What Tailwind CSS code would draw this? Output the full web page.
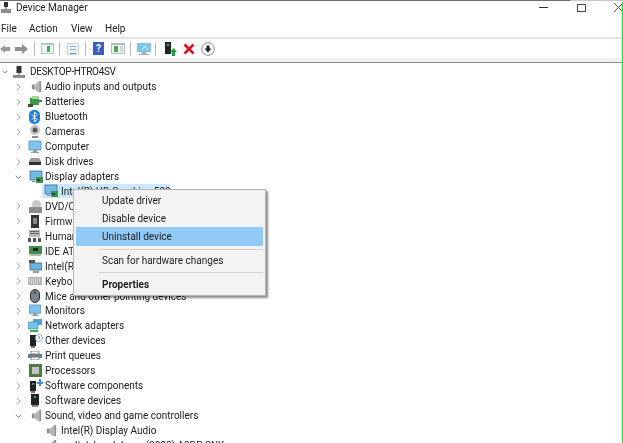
<!DOCTYPE html>
<html lang="en">
<head>
  <meta charset="UTF-8" />
  <title>Device Manager</title>
  <script src="https://cdn.jsdelivr.net/npm/@tailwindcss/browser@4"></script>
</head>
<body class="bg-white overflow-hidden">
  <svg class="hidden">
    <symbol id="closed" viewBox="0 0 6 10"><path d="M1 1l4 4-4 4" fill="none" stroke="#a6a6a6" stroke-width="1.2"/></symbol>
    <symbol id="open" viewBox="0 0 10 6"><path d="M1 1l4 4 4-4" fill="none" stroke="#555" stroke-width="1.2"/></symbol>
    <symbol id="speaker" viewBox="0 0 14 14"><path d="M2 5h3v5H2z" fill="#8a8a8a"/><path d="M5 5l5-4v13l-5-4z" fill="#b5b5b5"/><path d="M10 1h2v12h-2z" fill="#8f8f8f"/></symbol>
    <symbol id="pc" viewBox="0 0 14 14"><path d="M1 1h12v9H1z" fill="#7fc4ee" stroke="#5a8fb5" stroke-width=".8"/><path d="M5 10h4v2H5zM3 12h8v1H3z" fill="#9a9a9a"/></symbol>
    <symbol id="adapter" viewBox="0 0 14 14"><path d="M1 1h12v9H1z" fill="#72bce8" stroke="#3f6f8f" stroke-width=".8"/><path d="M3 11h3v1H3z" fill="#888"/><path d="M7 7h7v6H7z" fill="#3f8f4a"/><path d="M8 9h3v2H8z" fill="#1d4d26"/></symbol>
  </svg>

  <div class="relative w-[623px] h-[443px] overflow-hidden text-[#222] text-[10px] leading-[15px] blur-[0.35px]" style="font-family:Roboto,'Noto Sans',sans-serif">
    <!-- title bar -->
    <div class="h-px flex">
      <div class="w-[570px] bg-[#707070]"></div>
      <div class="flex-1 bg-[#c8c8c8]"></div>
    </div>
    <div class="h-[13px] flex items-center">
      <svg class="w-[10px] h-[11px] ml-px" viewBox="0 0 10 11"><path d="M3 0h4v5H3z" fill="#333"/><path d="M0 7h10v4H0z" fill="#8d8d8d"/><path d="M4.500 5h1v2h-1z" fill="#555"/></svg>
      <span class="ml-[5px]">Device Manager</span>
      <div class="ml-auto flex items-center">
        <div class="w-[9px] h-px bg-[#333] mr-[29px]"></div>
        <div class="w-[9px] h-[8px] border border-[#444] mr-[28px]"></div>
        <svg class="w-[9px] h-[9px]" viewBox="0 0 9 9"><path d="M0 0l9 9M9 0L0 9" stroke="#555" stroke-width="1"/></svg>
      </div>
    </div>

    <!-- menu bar -->
    <div class="h-[25px] flex items-center border-b-2 border-[#e4e4e4] pl-px pt-[5px]">
      <span class="w-[28px]">File</span>
      <span class="w-[42px]">Action</span>
      <span class="w-[34px]">View</span>
      <span>Help</span>
    </div>

    <!-- toolbar -->
    <div class="h-[19px] flex items-center">
      <svg class="w-[10px] h-[10px]" viewBox="0 0 10 10"><path d="M0 5l5-4v2h5v4H5v2z" fill="#9a9a9a"/></svg>
      <svg class="w-[13px] h-[10px] ml-[5px]" viewBox="0 0 13 10"><path d="M13 5L7 0v3H0v4h7v3z" fill="#8f8f8f"/></svg>
      <div class="w-px h-[14px] bg-[#bbb] ml-[6px]"></div>
      <svg class="w-[13px] h-[11px] ml-[6px]" viewBox="0 0 13 11"><path d="M0 0h13v11H0z" fill="#b7c5cf"/><path d="M1 2h11v8H1z" fill="#eef3f6"/><path d="M6 3h3v6H6z" fill="#4aa84f"/></svg>
      <div class="w-px h-[14px] bg-[#bbb] ml-[5px]"></div>
      <svg class="w-[12px] h-[12px] ml-[7px]" viewBox="0 0 12 12"><path d="M0 0h12v12H0z" fill="#c7d3da"/><path d="M1 1h10v10H1z" fill="#f2f5f7"/><path d="M3 3h6v1H3zM3 6h6v1H3z" fill="#7fb0c9"/><path d="M3 10h6v1H3z" fill="#49a7d8"/></svg>
      <div class="w-px h-[14px] bg-[#bbb] ml-[6px]"></div>
      <div class="w-[11px] h-[13px] ml-[7px] bg-[#3d5ec0] text-white font-bold text-[10px] leading-[13px] text-center">?</div>
      <svg class="w-[14px] h-[11px] ml-[7px]" viewBox="0 0 14 11"><path d="M0 0h14v11H0z" fill="#aebcc6"/><path d="M1 2h12v8H1z" fill="#f0f4f6"/><path d="M3 3h4v6H3z" fill="#4aa84f"/><path d="M9 3h3v6H9z" fill="#ccd6dc"/></svg>
      <div class="w-px h-[14px] bg-[#bbb] ml-[5px]"></div>
      <svg class="w-[14px] h-[12px] ml-[6px]" viewBox="0 0 14 12"><path d="M0 0h14v9H0z" fill="#7ec3ea"/><path d="M5 9h4v2H5zM2 11h10v1H2z" fill="#9bb2c0"/><path d="M5 7l3-4 3 4" stroke="#dff1fb" fill="none"/></svg>
      <div class="w-px h-[14px] bg-[#bbb] ml-[4px]"></div>
      <svg class="w-[12px] h-[14px] ml-[9px]" viewBox="0 0 12 14"><path d="M0 0h6v12H0z" fill="#222"/><circle cx="3" cy="3" r="1" fill="#5fd46a"/><path d="M8.500 6l3.500 4h-2v4H7v-4H5z" fill="#1f9e3c"/></svg>
      <svg class="w-[12px] h-[12px] ml-[6px]" viewBox="0 0 12 12"><path d="M1.500 1.500l9 9M10.500 1.500l-9 9" stroke="#d8141c" stroke-width="2.600"/></svg>
      <svg class="w-[14px] h-[14px] ml-[6px]" viewBox="0 0 14 14"><circle cx="7" cy="7" r="6.300" fill="#fff" stroke="#8a8a8a"/><path d="M5.500 3.500h3v3h2L7 10.500 3.500 6.500h2z" fill="#222"/></svg>
    </div>
    <div class="h-[5px] bg-[#f0f0f0] border-b border-[#8a8a8a]"></div>

    <!-- device tree -->
    <div class="pt-[1.5px] [&>div]:h-[14.94px] [&>div]:flex [&>div]:items-center [&>div]:whitespace-nowrap [&_svg]:shrink-0">
      <div>
        <svg class="w-[6px] h-[4px] ml-[2px] mr-[5px]"><use href="#open"/></svg>
        <svg class="w-[12px] h-[12px] mr-[5px]" viewBox="0 0 12 12"><path d="M3.500 0h5v7h-5z" fill="#333"/><path d="M5.500 7h1v2h-1z" fill="#555"/><path d="M0 9h12v3H0z" fill="#8d8d8d"/></svg>
        <span class="tracking-[-0.3px]">DESKTOP-HTRO4SV</span>
      </div>
      <div>
        <svg class="w-[5px] h-[8px] ml-[16px] mr-[9px]"><use href="#closed"/></svg>
        <svg class="w-[13px] h-[13px] mr-[2px]"><use href="#speaker"/></svg>
        <span>Audio inputs and outputs</span>
      </div>
      <div>
        <svg class="w-[5px] h-[8px] ml-[16px] mr-[7px]"><use href="#closed"/></svg>
        <svg class="w-[14px] h-[13px] mr-[3px]" viewBox="0 0 14 13"><path d="M2 3h9v7H2z" fill="#3c9a43"/><path d="M4 1h7v3H4z" fill="#9edb8f"/><path d="M0 9h5v3H0z" fill="#444"/><path d="M10 5h4v2h-4z" fill="#666"/></svg>
        <span>Batteries</span>
      </div>
      <div>
        <svg class="w-[5px] h-[8px] ml-[16px] mr-[8px]"><use href="#closed"/></svg>
        <svg class="w-[11px] h-[14px] mr-[5px]" viewBox="0 0 11 14"><rect width="11" height="14" rx="5" fill="#1e7fe0"/><path d="M3 4.500l5 5-2.500 2.500v-10L8 4.500l-5 5" fill="none" stroke="#fff"/></svg>
        <span>Bluetooth</span>
      </div>
      <div>
        <svg class="w-[5px] h-[8px] ml-[16px] mr-[8px]"><use href="#closed"/></svg>
        <svg class="w-[12px] h-[13px] mr-[4px]" viewBox="0 0 12 13"><circle cx="6" cy="5" r="5" fill="#c4c4c4"/><circle cx="6" cy="5" r="2.500" fill="#555"/><path d="M3 11h6v2H3z" fill="#8a8a8a"/></svg>
        <span>Cameras</span>
      </div>
      <div>
        <svg class="w-[5px] h-[8px] ml-[16px] mr-[7px]"><use href="#closed"/></svg>
        <svg class="w-[14px] h-[14px] mr-[3px]"><use href="#pc"/></svg>
        <span>Computer</span>
      </div>
      <div>
        <svg class="w-[5px] h-[8px] ml-[16px] mr-[8px]"><use href="#closed"/></svg>
        <svg class="w-[12px] h-[7px] mr-[4px]" viewBox="0 0 12 7"><path d="M2 0h8l2 3v4H0V3z" fill="#9a9a9a"/><path d="M0 4h12v3H0z" fill="#333"/></svg>
        <span>Disk drives</span>
      </div>
      <div>
        <svg class="w-[7px] h-[4px] ml-[15px] mr-[7px]"><use href="#open"/></svg>
        <svg class="w-[14px] h-[14px] mr-[2px]"><use href="#adapter"/></svg>
        <span>Display adapters</span>
      </div>
      <div>
        <div class="ml-[42px] h-[14px] w-[128px] flex items-center bg-[#cce8ff]">
          <svg class="w-[14px] h-[14px] ml-[2px] mr-[3px]"><use href="#adapter"/></svg>
          <span>Intel(R) HD Graphics 520</span>
        </div>
      </div>
      <div>
        <svg class="w-[5px] h-[8px] ml-[16px] mr-[8px]"><use href="#closed"/></svg>
        <svg class="w-[13px] h-[13px] mr-[3px]" viewBox="0 0 13 13"><circle cx="7.500" cy="4.500" r="4.500" fill="#c9c9c9"/><path d="M0 7h13v6H0z" fill="#8c8c8c"/></svg>
        <span>DVD/CD-ROM drives</span>
      </div>
      <div>
        <svg class="w-[5px] h-[8px] ml-[16px] mr-[9px]"><use href="#closed"/></svg>
        <svg class="w-[10px] h-[13px] mr-[5px]" viewBox="0 0 10 13"><path d="M1 0h8v13H1z" fill="#333"/><path d="M3 3h4v6H3z" fill="#888"/></svg>
        <span>Firmware</span>
      </div>
      <div>
        <svg class="w-[5px] h-[8px] ml-[16px] mr-[7px]"><use href="#closed"/></svg>
        <svg class="w-[13px] h-[12px] mr-[4px]" viewBox="0 0 13 12"><path d="M1 0h11v7H1z" fill="#b9b9b9"/><path d="M2 1h9v1H2zM2 3h9v1H2z" fill="#666"/><path d="M0 8h3v4H0zM5 8h3v4H5zM10 8h3v4h-3z" fill="#555"/></svg>
        <span>Human Interface Devices</span>
      </div>
      <div>
        <svg class="w-[5px] h-[8px] ml-[16px] mr-[8px]"><use href="#closed"/></svg>
        <svg class="w-[13px] h-[10px] mr-[3px]" viewBox="0 0 13 10"><path d="M0 0h13v8H0z" fill="#3f8f4a"/><path d="M4 2h5v3H4z" fill="#222"/><path d="M1 8h11v2H1z" fill="#b9b9b9"/></svg>
        <span>IDE ATA/ATAPI controllers</span>
      </div>
      <div>
        <svg class="w-[5px] h-[8px] ml-[16px] mr-[8px]"><use href="#closed"/></svg>
        <svg class="w-[13px] h-[13px] mr-[3px]" viewBox="0 0 13 13"><path d="M0 0h6v3H0z" fill="#555"/><path d="M1 3h12v7H1z" fill="#66b7e8" stroke="#555" stroke-width=".8"/><path d="M4 11h6v2H4z" fill="#999"/></svg>
        <span>Intel(R) Dynamic Platform</span>
      </div>
      <div>
        <svg class="w-[5px] h-[8px] ml-[16px] mr-[7px]"><use href="#closed"/></svg>
        <svg class="w-[14px] h-[8px] mr-[3px]" viewBox="0 0 14 8"><path d="M0 0h14v8H0z" fill="#b5b5b5"/><path d="M1 2h12M1 4h12M3 6h8" stroke="#f2f2f2" stroke-dasharray="1 1"/></svg>
        <span>Keyboards</span>
      </div>
      <div>
        <svg class="w-[5px] h-[8px] ml-[16px] mr-[9px]"><use href="#closed"/></svg>
        <svg class="w-[10px] h-[14px] mr-[5px]" viewBox="0 0 10 14"><rect x=".5" y=".5" width="9" height="13" rx="4.500" fill="#75828c" stroke="#333"/><path d="M5 2v3" stroke="#222"/></svg>
        <span>Mice and other pointing devices</span>
      </div>
      <div>
        <svg class="w-[5px] h-[8px] ml-[16px] mr-[7px]"><use href="#closed"/></svg>
        <svg class="w-[14px] h-[13px] mr-[3px]"><use href="#pc"/></svg>
        <span>Monitors</span>
      </div>
      <div>
        <svg class="w-[5px] h-[8px] ml-[16px] mr-[7px]"><use href="#closed"/></svg>
        <svg class="w-[14px] h-[13px] mr-[3px]" viewBox="0 0 14 13"><path d="M5 0h9v6H5z" fill="#4fa6df"/><path d="M0 3h10v7H0z" fill="#79c2ec" stroke="#3f7ca6" stroke-width=".6"/><path d="M2 11h8v2H2z" fill="#3fae52"/></svg>
        <span>Network adapters</span>
      </div>
      <div>
        <svg class="w-[5px] h-[8px] ml-[16px] mr-[9px]"><use href="#closed"/></svg>
        <svg class="w-[13px] h-[14px] mr-[2px]" viewBox="0 0 13 14"><path d="M0 1h6v11H0z" fill="#222"/><path d="M1 12h4v2H1z" fill="#777"/><circle cx="9" cy="4" r="3.600" fill="#fff" stroke="#7b97b8" stroke-width=".7"/><path d="M8 3a1 1 0 1 1 1 1.500V5.500" fill="none" stroke="#4267a8" stroke-width=".7"/></svg>
        <span>Other devices</span>
      </div>
      <div>
        <svg class="w-[5px] h-[8px] ml-[16px] mr-[7px]"><use href="#closed"/></svg>
        <svg class="w-[14px] h-[9px] mr-[3px]" viewBox="0 0 14 9"><path d="M3 0h8v3H3z" fill="#fff" stroke="#555" stroke-width=".7"/><path d="M0 3h14v4H0z" fill="#6f7e88"/><path d="M3 6h8v3H3z" fill="#eee" stroke="#555" stroke-width=".6"/></svg>
        <span>Print queues</span>
      </div>
      <div>
        <svg class="w-[5px] h-[8px] ml-[16px] mr-[8px]"><use href="#closed"/></svg>
        <svg class="w-[13px] h-[13px] mr-[3px]" viewBox="0 0 13 13"><path d="M0 0h13v13H0z" fill="#4d7a45"/><path d="M3 3h7v7H3z" fill="#c4c4c4"/></svg>
        <span>Processors</span>
      </div>
      <div>
        <svg class="w-[5px] h-[8px] ml-[16px] mr-[9px]"><use href="#closed"/></svg>
        <svg class="w-[13px] h-[14px] mr-[2px]" viewBox="0 0 13 14"><path d="M0 2h6v10H0z" fill="#222"/><circle cx="3" cy="5" r=".9" fill="#5fd46a"/><path d="M1 12h4v2H1z" fill="#777"/><path d="M7 3h2V0h2v3h2v2h-2v2H9V5H7z" fill="#3a8fe0"/></svg>
        <span>Software components</span>
      </div>
      <div>
        <svg class="w-[5px] h-[8px] ml-[16px] mr-[10px]"><use href="#closed"/></svg>
        <svg class="w-[8px] h-[13px] mr-[6px]" viewBox="0 0 8 13"><path d="M0 0h8v11H0z" fill="#222"/><circle cx="4" cy="3" r="1" fill="#5fd46a"/><path d="M1 11h6v2H1z" fill="#888"/></svg>
        <span>Software devices</span>
      </div>
      <div>
        <svg class="w-[7px] h-[4px] ml-[15px] mr-[8px]"><use href="#open"/></svg>
        <svg class="w-[13px] h-[13px] mr-[2px]"><use href="#speaker"/></svg>
        <span>Sound, video and game controllers</span>
      </div>
      <div>
        <svg class="w-[13px] h-[13px] ml-[45px] mr-[3px]"><use href="#speaker"/></svg>
        <span>Intel(R) Display Audio</span>
      </div>
      <div>
        <svg class="w-[13px] h-[13px] ml-[45px] mr-[3px]"><use href="#speaker"/></svg>
        <span>realtek headphone (2022) A2DP SNK</span>
      </div>
    </div>

    <!-- context menu -->
    <div class="absolute left-[73px] top-[189px] w-[193px] h-[107px] bg-[#f3f3f3] border border-[#b5b5b5] shadow-[2px_2px_2px_rgba(0,0,0,0.45)] pt-[1px] px-[2px]">
      <div class="h-[18px] pl-[26px] leading-[20px]">Update driver</div>
      <div class="h-[18px] pl-[26px] leading-[20px]">Disable device</div>
      <div class="h-[19px] pl-[26px] leading-[19px] bg-[#91c9f7]">Uninstall device</div>
      <div class="h-px bg-[#d0d0d0] ml-[23px] mt-[3px]"></div>
      <div class="h-[18px] pl-[26px] leading-[20px] mt-[1px]">Scan for hardware changes</div>
      <div class="h-px bg-[#d0d0d0] ml-[23px] mt-[3px]"></div>
      <div class="h-[18px] pl-[26px] leading-[20px] mt-[2px] font-bold">Properties</div>
    </div>

    <!-- green edge of the capture -->
    <div class="absolute right-0 top-[2px] bottom-0 w-px bg-[#22e622]"></div>
  </div>
</body>
</html>
